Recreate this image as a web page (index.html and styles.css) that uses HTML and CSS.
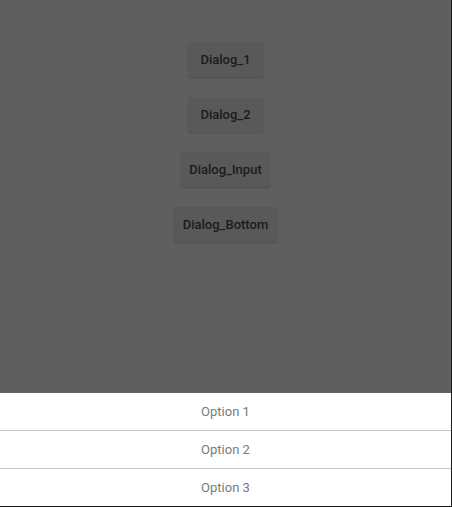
FILE: index.html
```html
<!DOCTYPE html>
<html>
<head>
<meta charset="utf-8">
<link rel="stylesheet" href="styles.css">
</head>
<body>
<div class="screen">
  <div class="content">
    <button class="btn">Dialog_1</button>
    <button class="btn">Dialog_2</button>
    <button class="btn">Dialog_Input</button>
    <button class="btn">Dialog_Bottom</button>
  </div>
  <div class="sheet">
    <div class="option">Option 1</div>
    <div class="option">Option 2</div>
    <div class="option">Option 3</div>
  </div>
</div>
</body>
</html>
```
FILE: styles.css
```css
html, body {
  margin: 0;
  padding: 0;
}
body {
  width: 452px;
  height: 507px;
  overflow: hidden;
  font-family: Roboto, "Liberation Sans", sans-serif;
}
.screen {
  width: 451px;
  height: 506px;
  border-right: 1px solid #1e1e1e;
  border-bottom: 1px solid #1e1e1e;
  display: flex;
  flex-direction: column;
}
.content {
  height: 393px;
  background: #5f5f5f;
  display: flex;
  flex-direction: column;
  align-items: center;
  padding-top: 42px;
  box-sizing: border-box;
  gap: 20px;
}
.btn {
  height: 35px;
  min-width: 75px;
  padding: 0 8.5px;
  border: none;
  border-radius: 2px;
  background: #595959;
  color: #1b1b1b;
  font-family: Roboto, "Liberation Sans", sans-serif;
  font-size: 13px;
  font-weight: 500;
  box-shadow: 0 1px 2px rgba(0,0,0,0.18);
}
.sheet {
  background: #fff;
  display: flex;
  flex-direction: column;
}
.option {
  height: 37px;
  display: flex;
  align-items: center;
  justify-content: center;
  color: #7a7a7a;
  font-size: 13px;
  border-bottom: 1px solid #c6c6c6;
}
.option:last-child {
  border-bottom: none;
}
```
